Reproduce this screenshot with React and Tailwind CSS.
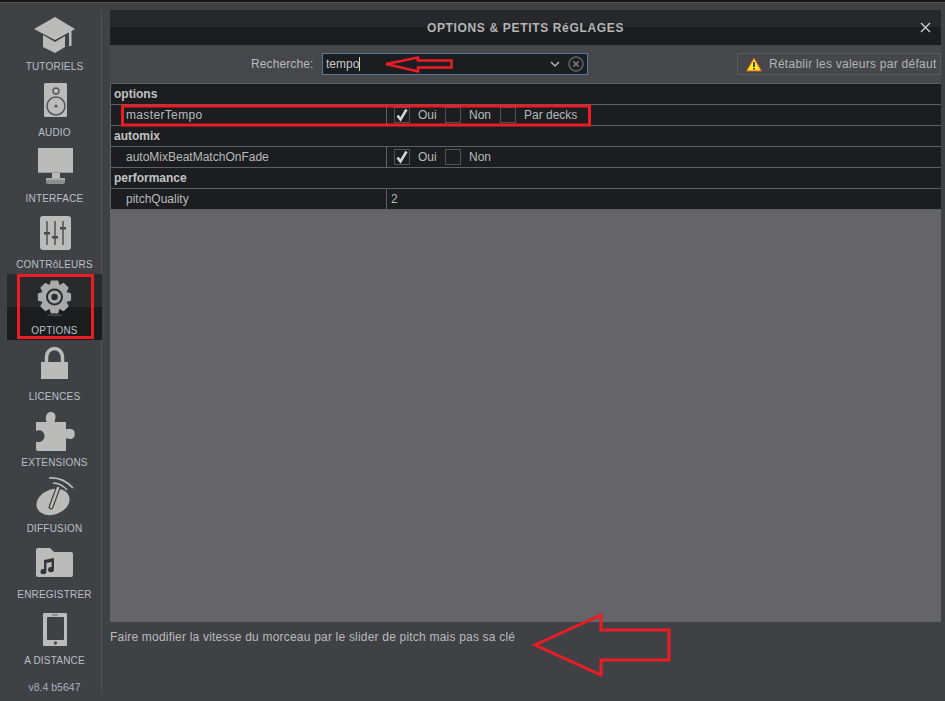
import React from "react";

const C = "#bbbcba";
const D = "#404145";

function gearPath(cx, cy, ro, ri, n) {
  const pts = [];
  const step = (Math.PI * 2) / n;
  for (let i = 0; i < n; i++) {
    const a = i * step - Math.PI / 2;
    [[-0.5, ri], [-0.27, ro], [0.27, ro], [0.5, ri]].forEach(([o, r]) => {
      pts.push(`${(cx + r * Math.cos(a + o * step)).toFixed(2)},${(cy + r * Math.sin(a + o * step)).toFixed(2)}`);
    });
  }
  return "M" + pts.join("L") + "Z";
}

const Svg = ({ children }) => (
  <svg width="48" height="46" viewBox="0 0 48 46" className="block overflow-visible">{children}</svg>
);

const Cap = () => (
  <Svg>
    <path d="M24 3 L44 15 L24 26 L3 15 Z" fill={C} />
    <path d="M12 21 L24 28 L34 22 V33 L24 39 L12 33 Z" fill={C} />
    <rect x="38" y="15" width="2.5" height="17" fill={C} />
  </Svg>
);
const Speaker = () => (
  <Svg>
    <rect x="13" y="3" width="23" height="34" rx="1.5" fill={C} />
    <circle cx="25" cy="11" r="3" fill="none" stroke="#55565a" strokeWidth="1.4" />
    <circle cx="25" cy="26" r="9" fill="none" stroke="#55565a" strokeWidth="1.5" />
    <circle cx="25" cy="26" r="1.6" fill="#55565a" />
  </Svg>
);
const Monitor = () => (
  <Svg>
    <rect x="7" y="2" width="35" height="25" fill={C} />
    <rect x="7" y="26" width="35" height="1" fill="#9b9c9b" />
    <rect x="21" y="27" width="8" height="5" fill={C} />
    <path d="M15 32 H34 V36 Q34 38 31 38 H18 Q15 38 15 36 Z" fill="#8d8e8e" />
    <rect x="15" y="32" width="19" height="2" fill="#a9aaa9" />
  </Svg>
);
const Mixer = () => (
  <Svg>
    <rect x="9" y="4" width="31" height="34" rx="3" fill={C} />
    <g fill="#4a4b4f">
      <rect x="15.3" y="9" width="1.4" height="24" />
      <rect x="23.3" y="9" width="1.4" height="24" />
      <rect x="31.3" y="9" width="1.4" height="24" />
      <rect x="13" y="20" width="6" height="2.5" />
      <rect x="21" y="24" width="6" height="2.5" />
      <rect x="29" y="15" width="6" height="2.5" />
    </g>
  </Svg>
);
const Gear = () => (
  <Svg>
    <path d={gearPath(23.5, 19, 17, 13, 8)} fill="#a9aaa9" />
    <circle cx="23.5" cy="19" r="8.5" fill="#2a2b2d" />
    <circle cx="23.5" cy="19" r="6.5" fill="#a9aaa9" />
    <circle cx="23.5" cy="19" r="3.2" fill="#2a2b2d" />
    <ellipse cx="23.5" cy="37" rx="8" ry="1.5" fill="#3a3b3c" />
  </Svg>
);
const Lock = () => (
  <Svg>
    <path d="M15.5 19 V13 A8 8.5 0 0 1 31.5 13 V19" fill="none" stroke={C} strokeWidth="3.5" />
    <rect x="10" y="18" width="27" height="17" fill={C} />
  </Svg>
);
const Puzzle = () => (
  <Svg>
    <path
      d="M5 12 H15.5 C14.5 9 14.5 7 15.5 5 C16.5 2.5 18.5 2 20 2 C22.5 2 24.5 3.5 24.5 6.5 C24.5 8.5 24 10.5 23.5 12 H35 V19.5 C37 18.5 39.5 18.5 41.5 19.5 C44.5 21 44.5 27 41.5 28.5 C39.5 29.5 37 29 35 28 V41 H7 Q5 41 5 39 V31.5 C8 33 13.5 31.5 13.5 26 C13.5 20.5 8 19 5 21 Z"
      fill={C}
    />
  </Svg>
);
const Dish = () => (
  <Svg>
    <ellipse cx="22" cy="26" rx="17" ry="12.5" transform="rotate(-20 22 26)" fill={C} />
    <path d="M20 31 L27 12" stroke={D} strokeWidth="5" strokeLinecap="round" />
    <path d="M20 31 L27 12" stroke={C} strokeWidth="2.4" strokeLinecap="round" />
    <path d="M18 2 Q32 1 42 12" fill="none" stroke={C} strokeWidth="1.6" />
    <path d="M22 7 Q30 7 36 14" fill="none" stroke={C} strokeWidth="1.6" />
  </Svg>
);
const Folder = () => (
  <Svg>
    <path d="M7 6 H19 L23 10 H40 Q42 10 42 12 V33 Q42 35 40 35 H7 Q5 35 5 33 V8 Q5 6 7 6 Z" fill={C} />
    <path d="M13 18 L23 16 V27.5 A3 2.6 0 1 1 20.6 25 V20 L15.4 21 V29.5 A3 2.6 0 1 1 13 27 Z" fill="#34353a" />
  </Svg>
);
const Tablet = () => (
  <Svg>
    <rect x="12" y="5" width="24" height="33" rx="1" fill={C} />
    <rect x="16" y="9" width="17" height="23" rx="1" fill={D} />
    <rect x="21" y="6.5" width="6" height="1" fill="#66676a" />
    <circle cx="24.5" cy="35" r="1.7" fill="#4a4b4f" />
  </Svg>
);

const items = [
  ["TUTORIELS", Cap],
  ["AUDIO", Speaker],
  ["INTERFACE", Monitor],
  ["CONTRôLEURS", Mixer],
  ["OPTIONS", Gear, true],
  ["LICENCES", Lock],
  ["EXTENSIONS", Puzzle],
  ["DIFFUSION", Dish],
  ["ENREGISTRER", Folder],
  ["A DISTANCE", Tablet],
];

function NavItem({ label, Icon, active }) {
  return (
    <div
      className={
        "h-[66px] w-[95px] pt-[4px] shrink-0 flex flex-col items-center " +
        (active ? "bg-[linear-gradient(#292a2c_50%,#1b1c1e_50%)]" : "")
      }
    >
      <Icon />
      <div className="h-[14px] leading-[14px] text-[10px] tracking-[0.2px] text-[#b9c0c8] whitespace-nowrap">{label}</div>
    </div>
  );
}

const Check = ({ on }) => (
  <span className="w-[16px] h-[16px] border border-[#505155] flex items-center justify-center shrink-0">
    {on && (
      <svg width="14" height="14" viewBox="0 0 14 14">
        <path d="M2.5 7.5 L5.5 11.5 L11.5 1.5" fill="none" stroke="#d4d4d4" strokeWidth="2.6" />
      </svg>
    )}
  </span>
);

const Group = ({ title }) => (
  <div className="h-[21px] border-b border-[#5f6064] pl-[3px] flex items-center font-bold text-[#c2c3c4]">{title}</div>
);

const Row = ({ name, nameClass, children }) => (
  <div className="h-[21px] border-b border-[#5f6064] flex items-center">
    <div className={"w-[276px] h-full pl-[15px] flex items-center border-r border-[#5f6064] text-[#b9babb] shrink-0 " + (nameClass || "")}>{name}</div>
    <div className="flex items-center pl-[7px] text-[#b9babb]">{children}</div>
  </div>
);

export default function App() {
  return (
    <div
      className="relative w-[945px] h-[701px] overflow-hidden bg-[#404145] text-[12px] flex flex-col"
      style={{ fontFamily: '"Liberation Sans", Arial, sans-serif' }}
    >
      <div className="h-[2px] bg-[#1b1614] shrink-0" />
      <div className="h-[1px] bg-[#55565a] shrink-0" />
      <div className="flex flex-1 pt-[7px] min-h-0">
        <aside className="w-[102px] h-[683px] border-r border-[#515256] pl-[7px] shrink-0 flex flex-col">
          {items.map(([l, I, a]) => (
            <NavItem key={l} label={l} Icon={I} active={a} />
          ))}
          <div className="w-[95px] mt-[10px] text-center text-[10.5px] leading-[14px] text-[#a9b2bc] shrink-0">v8.4 b5647</div>
        </aside>

        <main className="ml-[8px] w-[831px] flex flex-col">
          <header className="relative h-[35px] bg-[linear-gradient(#27282b_50%,#1c1d1f_50%)] flex items-center justify-center shrink-0">
            <span className="font-bold text-[12px] tracking-[0.66px] text-[#b4b5b5]">OPTIONS &amp; PETITS RéGLAGES</span>
            <svg className="absolute right-[10px] top-[12px]" width="11" height="11" viewBox="0 0 11 11">
              <path d="M1 1 L10 10 M10 1 L1 10" stroke="#cfcfcf" strokeWidth="1.4" />
            </svg>
          </header>

          <div className="h-[38px] bg-[#46474b] flex items-center shrink-0 relative">
            <span className="ml-[141px] w-[71px] text-[#b9babb] tracking-[0.1px]">Recherche:</span>
            <div className="w-[266px] h-[22px] border border-[#5a7899] bg-[#1c1d20] flex items-center pl-[3px] pr-[3px]">
              <span className="text-[#c6c7c8] border-r border-[#d0d0d0] leading-[14px]">tempo</span>
              <svg className="ml-auto" width="10" height="7" viewBox="0 0 10 7">
                <path d="M1 1 L5 5 L9 1" fill="none" stroke="#b4b5b5" strokeWidth="1.5" />
              </svg>
              <svg className="ml-[8px]" width="16" height="16" viewBox="0 0 16 16">
                <circle cx="8" cy="8" r="7" fill="none" stroke="#646569" strokeWidth="1.5" />
                <path d="M5.3 5.3 L10.7 10.7 M10.7 5.3 L5.3 10.7" stroke="#737478" strokeWidth="1.8" />
              </svg>
            </div>
            <div className="ml-auto w-[204px] h-[22px] border border-[#5b5c60] bg-[#46474b] flex items-center pl-[8px] text-[#b4b5b6]">
              <svg width="16" height="15" viewBox="0 0 16 15" className="shrink-0">
                <path d="M8 1 L15.5 14 H0.5 Z" fill="#f6ee1e" stroke="#e8542a" strokeWidth="1" />
                <rect x="7.2" y="5" width="1.6" height="5" fill="#222" />
                <rect x="7.2" y="11" width="1.6" height="1.6" fill="#222" />
              </svg>
              <span className="ml-[7px] tracking-[0.26px] whitespace-nowrap">Rétablir les valeurs par défaut</span>
            </div>
          </div>

          <div className="flex-1 max-h-[539px] bg-[#646469] flex flex-col">
            <div className="bg-[#1c1d20] border-t border-l border-[#5f6064]">
              <Group title="options" />
              <Row name="masterTempo" nameClass="tracking-[0.35px]">
                <Check on />
                <span className="ml-[8px] w-[27px]">Oui</span>
                <Check />
                <span className="ml-[8px] w-[31px]">Non</span>
                <Check />
                <span className="ml-[8px]">Par decks</span>
              </Row>
              <Group title="automix" />
              <Row name="autoMixBeatMatchOnFade">
                <Check on />
                <span className="ml-[8px] w-[27px]">Oui</span>
                <Check />
                <span className="ml-[8px]">Non</span>
              </Row>
              <Group title="performance" />
              <Row name="pitchQuality">
                <span className="-ml-[3px]">2</span>
              </Row>
            </div>
          </div>

          <div className="mt-[8px] leading-[14px] tracking-[0.2px] text-[#b9babc] whitespace-nowrap">Faire modifier la vitesse du morceau par le slider de pitch mais pas sa clé</div>
        </main>
      </div>

      <svg className="absolute left-0 top-0 pointer-events-none" width="945" height="701" viewBox="0 0 945 701" fill="none" stroke="#ed1c24" strokeWidth="3">
        <rect x="18.5" y="275.5" width="74" height="62" />
        <rect x="122.5" y="106" width="467" height="19" />
        <path d="M386 64 L418 57.5 V60.5 H451.5 V67.5 H418 V71.5 Z" strokeWidth="2.5" />
        <path d="M535 645 L601 615 V630 H669 V660 H601 V675 Z" />
      </svg>
    </div>
  );
}
